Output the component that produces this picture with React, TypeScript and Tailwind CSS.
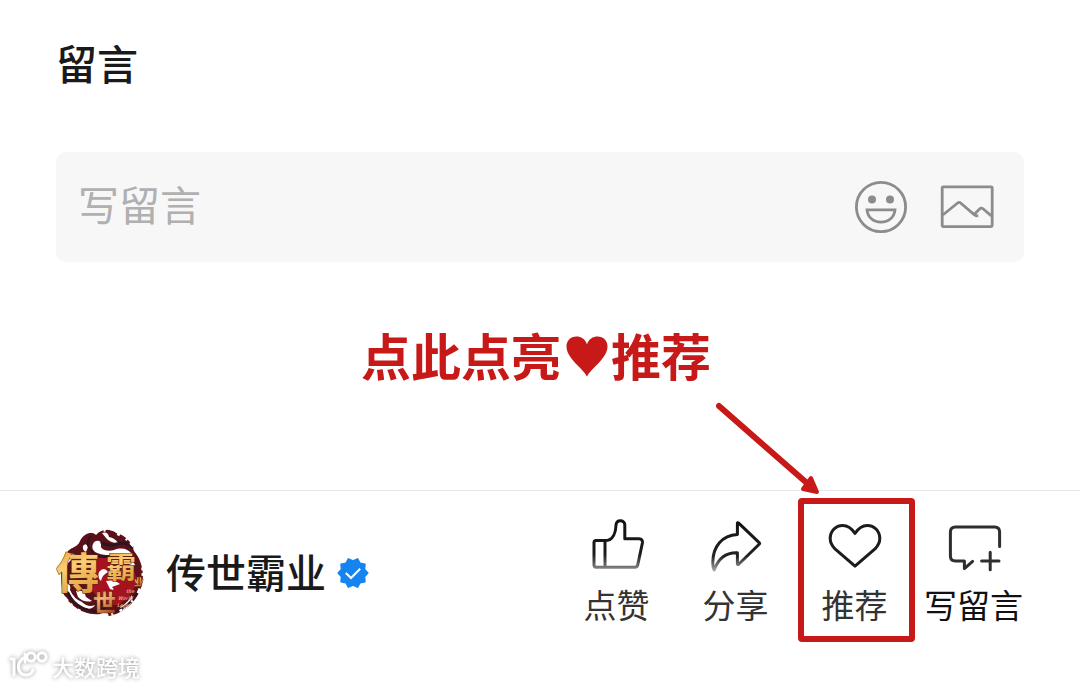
import React from 'react';

interface IconProps {
  className?: string;
}

interface ActionButtonProps {
  label: string;
  icon: React.ReactNode;
  className?: string;
  children?: React.ReactNode;
}

const SmileIcon: React.FC<IconProps> = ({ className = '' }) => (
  <svg viewBox="0 0 52 52" className={className} fill="none" stroke="currentColor" strokeWidth="2.8" aria-hidden="true">
    <circle cx="26" cy="26" r="24.6" />
    <circle cx="17" cy="18.4" r="4" fill="currentColor" stroke="none" />
    <circle cx="35" cy="18.4" r="4" fill="currentColor" stroke="none" />
    <path d="M12 28.8H40C39.2 36.3 33.6 41.2 26 41.2C18.4 41.2 12.8 36.3 12 28.8Z" />
  </svg>
);

const PictureIcon: React.FC<IconProps> = ({ className = '' }) => (
  <svg viewBox="0 0 54 52" className={className} fill="none" stroke="currentColor" strokeWidth="2.8" aria-hidden="true">
    <rect x="2.2" y="5.8" width="50" height="39.8" rx="1" />
    <path d="M2.8 34L17.6 22Q19.1 20.8 20.6 22L34.2 33.6Q35.6 34.8 38.2 34.8" />
    <path d="M33.8 33.8L39.8 27.8Q41.4 26.4 43 27.8L51.4 34.8" />
  </svg>
);

const ThumbIcon = () => (
  <svg viewBox="0 0 56 56" className="h-14 w-14" fill="none" stroke="url(#thumbFade)" strokeWidth="3" strokeLinejoin="round" aria-hidden="true">
    <defs>
      <linearGradient id="thumbFade" gradientUnits="userSpaceOnUse" x1="0" y1="0" x2="0" y2="51">
        <stop offset="0" stopColor="#111" />
        <stop offset="0.72" stopColor="#1c1c1c" />
        <stop offset="1" stopColor="#858585" />
      </linearGradient>
    </defs>
    <path d="M16 22.6H7Q5 22.6 5 24.6V47Q5 49.2 7 49.2H46Q48.3 49.2 48.8 46.6L53.4 25Q54 21 50 20.8H35.8V6.8C35.8 4.2 33.8 2.8 31.4 2.8C28.8 2.8 27.2 4.6 27 7C26.8 13.4 24.6 22.6 16 22.6Z" />
    <path d="M16 22.6V49" />
  </svg>
);

const ShareIcon = () => (
  <svg viewBox="0 0 56 56" className="h-14 w-14" fill="none" stroke="url(#shareFade)" strokeWidth="3" strokeLinejoin="round" aria-hidden="true">
    <defs>
      <linearGradient id="shareFade" gradientUnits="userSpaceOnUse" x1="0" y1="0" x2="0" y2="53">
        <stop offset="0" stopColor="#111" />
        <stop offset="0.72" stopColor="#222" />
        <stop offset="1" stopColor="#aaa" />
      </linearGradient>
    </defs>
    <path d="M29.4 5.6Q29.4 4 30.7 5.1L51.4 24.8Q52 25.4 51.4 26L30.7 46.2Q29.4 47.2 29.4 45.6V34.8C19.4 34.4 10.6 39.8 6.2 52C5.2 51.6 4.8 47.8 4.8 43.6C5.2 28.6 13.8 17.2 29.4 16.4Z" />
  </svg>
);

const HeartIcon = () => (
  <svg viewBox="0 0 56 56" className="h-14 w-14" fill="none" stroke="#1c1c1c" strokeWidth="3" strokeLinejoin="round" aria-hidden="true">
    <path d="M28 15.4C24.6 10.2 20.6 7.4 15.8 7.4C8.4 7.4 3.2 13.2 3.2 20.6C3.2 24.6 4.6 27.6 8 30.8L28 48.2L48 30.8C51.4 27.6 52.8 24.6 52.8 20.6C52.8 13.2 47.6 7.4 40.2 7.4C35.4 7.4 31.4 10.2 28 15.4Z" />
  </svg>
);

const CommentIcon = () => (
  <svg viewBox="0 0 56 56" className="h-14 w-14" fill="none" stroke="#2e2e2e" strokeWidth="3" strokeLinecap="round" strokeLinejoin="round" aria-hidden="true">
    <path d="M53.6 28.4V14Q53.6 9 48.6 9H9.4Q4.4 9 4.4 14V38Q4.4 43 9.4 43H18.4V50.6L26.6 43.4" />
    <path d="M35.6 43H53M44.2 34.2V51.8" />
  </svg>
);

const VerifiedBadge = () => {
  // ten-pointed seal
  const points = Array.from({ length: 20 }, (_, i) => {
    const radius = i % 2 === 0 ? 14.8 : 12;
    const angle = (i * Math.PI) / 10;
    return `${16 + radius * Math.cos(angle)},${16 + radius * Math.sin(angle)}`;
  }).join(' ');

  return (
    <svg viewBox="0 0 32 32" className="h-8 w-8" role="img" aria-label="已认证">
      <polygon points={points} fill="#1684f0" stroke="#1684f0" strokeWidth="1.6" strokeLinejoin="round" />
      <path d="M8.8 16L14 21L23.2 11.8" fill="none" stroke="#fff" strokeWidth="2" />
    </svg>
  );
};

const Avatar = () => (
  <svg viewBox="0 0 88 88" className="h-[88px] w-[88px] shrink-0 font-['Noto_Sans_CJK_SC',sans-serif] font-bold" aria-hidden="true">
    <defs>
      <clipPath id="avatarClip">
        <circle cx="44" cy="44" r="44" />
      </clipPath>
      <linearGradient id="gold" x1="0" y1="0" x2="0.3" y2="1">
        <stop offset="0" stopColor="#f08c12" />
        <stop offset="0.5" stopColor="#f9cf77" />
        <stop offset="1" stopColor="#e09a3a" />
      </linearGradient>
      <linearGradient id="bronze" x1="0" y1="0" x2="0.4" y2="1">
        <stop offset="0" stopColor="#a8501c" />
        <stop offset="0.5" stopColor="#f0b870" />
        <stop offset="1" stopColor="#a34a20" />
      </linearGradient>
    </defs>
    <g clipPath="url(#avatarClip)">
      {/* dragon ring */}
      <path d="M24 12C28 4 36 2 40 6C46 -1 56 0 60 4C70 6 76 14 78 22C88 34 90 52 82 66C76 78 64 86 52 88C54 84 50 82 44 85C30 87 14 78 7 64C4 50 4 34 12 22C16 18 22 18 24 12Z" fill="#5c1119" />
      <path d="M38 30C50 26 70 30 78 42C84 54 76 68 62 76C48 76 34 66 32 48Z" fill="#a5131f" />
      <g fill="#fff">
        <path d="M37 15C39 10 46 11 45 16C44 20 50 23 58 21C66 18 72 20 76 25C68 22 62 26 52 26C42 26 34 22 37 15Z" />
        <path d="M27 17Q30 13 32 18L30 23Q26 21 27 17Z" />
        <path d="M43 43Q48 37 52 43Q46 46 45 52Q41 49 43 43Z" />
        <path d="M8 54Q16 54 14 61Q18 70 26 73Q32 79 39 76Q35 83 24 77Q12 70 8 54Z" />
        <path d="M20 62Q28 60 30 68L36 72Q28 74 22 68Z" />
        <path d="M50 52Q58 50 64 55L56 58Q60 62 54 60Z" />
        <path d="M64 78Q72 74 76 66Q78 74 68 82Z" />
        <path d="M68 30Q76 28 79 36L74 38Q74 33 68 30Z" />
        <path d="M8 28Q14 22 20 26L12 34L8 46Q4 36 8 28Z" />
        <path d="M46 4Q52 2 53 8Q59 9 62 14Q54 14 50 9Z" />
      </g>
      <g fill="none" stroke="#2d1420" strokeLinecap="round">
        <path d="M34 8C28 15 35 27 48 28C60 29 70 24 78 30" strokeWidth="2" />
        <path d="M46 14Q54 18 61 15T76 18" strokeWidth="3" />
        <path d="M12 64C18 78 34 85 46 81C51 78 48 73 42 76" strokeWidth="3" />
        <path d="M56 84Q74 78 81 64" strokeWidth="2" />
      </g>
      <circle cx="44" cy="44" r="43" fill="none" stroke="#fff" strokeWidth="3" strokeDasharray="3 7 2 4 5 9 2 12" />
      <g stroke="#5a2411" strokeWidth="1" paintOrder="stroke">
        <text x="0" y="60" fontSize="43" fill="url(#gold)">傳</text>
        <text x="50" y="49" fontSize="30" fill="url(#gold)">霸</text>
        <text x="37" y="82" fontSize="23" fill="url(#bronze)">世</text>
        <text x="78" y="57" fontSize="10" fill="url(#bronze)">业</text>
      </g>
      <g fill="#e0a078" fontSize="5" fontStyle="italic">
        <text x="70" y="64">the</text>
        <text x="62" y="71">World</text>
        <text x="61" y="78">Legend</text>
      </g>
    </g>
  </svg>
);

const Watermark = () => (
  <div className="absolute bottom-1 left-2 flex items-center gap-1 text-[22px] leading-8 font-medium text-white drop-shadow-[0_0_2px_rgba(0,0,0,0.4)]">
    <svg viewBox="0 0 40 32" className="h-8 w-10" fill="none" stroke="#fff" strokeWidth="3" strokeLinecap="round" aria-hidden="true">
      <path d="M3 9H6V25" />
      <path d="M15 8L11 13C9 19 12 25 18 25C22 25 24 23 25 20" />
      <path d="M17 4V12" />
      <circle cx="23" cy="7" r="4.2" />
      <circle cx="34" cy="7" r="4.2" />
    </svg>
    <span>大数跨境</span>
  </div>
);

const ActionButton: React.FC<ActionButtonProps> = ({ label, icon, className = 'text-[#333]', children }) => (
  <button type="button" className={`relative flex cursor-pointer flex-col items-center pt-5 pb-[18px] ${className}`}>
    {icon}
    <span className="mt-[10px] text-[33px] leading-10 whitespace-nowrap">{label}</span>
    {children}
  </button>
);

// red frame and arrow pointing at the recommend button
const Highlight = () => (
  <>
    <span className="pointer-events-none absolute inset-y-0 -right-px left-[3px] rounded-sm border-[6px] border-[#c71a18]" />
    <svg viewBox="0 0 110 96" className="pointer-events-none absolute right-[93px] bottom-full h-24 w-[110px]" aria-hidden="true">
      <path d="M8 4L97 82" stroke="#c71a18" strokeWidth="6" strokeLinecap="round" />
      <path d="M100 76L106 90L92 87Z" fill="#c71a18" stroke="#c71a18" strokeWidth="4" strokeLinejoin="round" />
    </svg>
  </>
);

export default function App() {
  return (
    <div className="relative bg-white font-['Noto_Sans_CJK_SC',sans-serif] text-[#1a1a1a]">
      <main className="px-14 pt-8">
        <h1 className="text-[41px] leading-[60px] font-medium">留言</h1>

        <div className="mt-[60px] flex items-center rounded-[10px] bg-[#f7f7f7] py-6 pr-[30px] pl-[22px] text-[#8c8c8c]">
          <input
            type="text"
            aria-label="写留言"
            placeholder="写留言"
            className="h-[62px] min-w-0 flex-1 bg-transparent pb-2 text-[41px] text-[#1a1a1a] outline-none placeholder:text-[#b0b0b0]"
          />
          <button type="button" aria-label="表情" className="cursor-pointer">
            <SmileIcon className="h-[52px] w-[52px]" />
          </button>
          <button type="button" aria-label="图片" className="ml-[33px] cursor-pointer">
            <PictureIcon className="h-[52px] w-[54px]" />
          </button>
        </div>

        <h2 className="mt-[62px] mb-[106px] flex items-center justify-center pr-2 text-[50px] leading-[60px] font-bold text-[#c71a18]">
          <span>点此点亮</span>
          <svg viewBox="0 0 50 50" className="h-[50px] w-[50px]" fill="currentColor" role="img" aria-label="爱心">
            <path d="M26 47.5C22 39.5 5.5 29.5 5.5 17.6C5.5 11.6 9.8 7.6 15.4 7.6C20 7.6 24.4 10.2 26 15.4C27.6 10.2 32 7.6 36.6 7.6C42.2 7.6 46.5 11.6 46.5 17.6C46.5 29.5 30 39.5 26 47.5Z" />
          </svg>
          <span>推荐</span>
        </h2>
      </main>

      <footer className="flex items-start justify-between border-t border-[#e6e6e6] pt-[7px] pr-[47px] pb-11 pl-14">
        <div className="flex items-center pt-[31px]">
          <Avatar />
          <span className="ml-[22px] pb-1 text-[40px] leading-[60px] font-medium whitespace-nowrap">传世霸业</span>
          <span className="ml-[11px]">
            <VerifiedBadge />
          </span>
        </div>

        <nav className="grid grid-cols-[repeat(4,119px)]">
          <ActionButton label="点赞" icon={<ThumbIcon />} />
          <ActionButton label="分享" icon={<ShareIcon />} />
          <ActionButton label="推荐" icon={<HeartIcon />}>
            <Highlight />
          </ActionButton>
          <ActionButton label="写留言" icon={<CommentIcon />} className="text-[#111]" />
        </nav>
      </footer>

      <Watermark />
    </div>
  );
}
